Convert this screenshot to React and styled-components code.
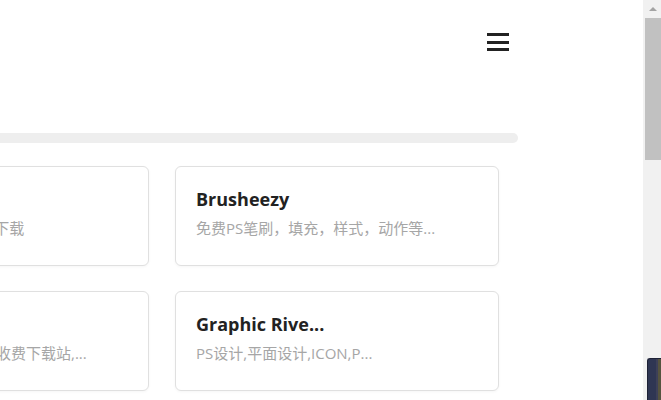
import React from "react";
import styled, { createGlobalStyle } from "styled-components";

const GlobalStyle = createGlobalStyle`
  html, body {
    margin: 0;
    padding: 0;
    background: #fff;
    font-family: "Open Sans", "Noto Sans CJK SC", sans-serif;
    overflow: hidden;
  }
`;

const Shell = styled.div`
  display: flex;
  height: 400px;
  overflow: hidden;
`;

const Main = styled.main`
  flex: 1;
  min-width: 0;
  overflow: hidden;
`;

const Wrapper = styled.div`
  width: 713px;
  margin-left: -195px;
  box-sizing: border-box;
`;

const Header = styled.header`
  display: flex;
  justify-content: flex-end;
  align-items: center;
  height: 84px;
  padding-right: 9px;
`;

const MenuButton = styled.button`
  width: 22px;
  height: 18px;
  padding: 0;
  border: none;
  background: none;
  display: flex;
  flex-direction: column;
  justify-content: space-between;
  cursor: pointer;
  span {
    display: block;
    height: 3px;
    background: #222;
  }
`;

const SearchBar = styled.div`
  margin-top: 49px;
  height: 10px;
  background: #eeeeee;
  border-radius: 5px;
`;

const Grid = styled.div`
  display: grid;
  grid-template-columns: 324px 324px;
  column-gap: 26px;
  row-gap: 25px;
  padding: 23px 20px;
`;

const Card = styled.a`
  display: block;
  height: 100px;
  box-sizing: border-box;
  padding: 20px 20px 0;
  border: 1px solid #e0e0e0;
  border-radius: 6px;
  background: #fff;
  box-shadow: 0 1px 3px rgba(0, 0, 0, 0.04);
  text-decoration: none;
`;

const Title = styled.h3`
  margin: 0;
  font-size: 18px;
  line-height: 24px;
  font-weight: 700;
  color: #222;
  white-space: nowrap;
  overflow: hidden;
  text-overflow: ellipsis;
`;

const Desc = styled.p`
  margin: 6px 0 0;
  font-size: 15px;
  line-height: 22px;
  color: #a6a6a6;
  white-space: nowrap;
  overflow: hidden;
  text-overflow: ellipsis;
`;

const ScrollTrack = styled.div`
  width: 18px;
  flex-shrink: 0;
  background: #f1f1f1;
  display: flex;
  flex-direction: column;
  align-items: flex-end;
`;

const ScrollArrow = styled.div`
  height: 18px;
  width: 16px;
  display: flex;
  align-items: center;
  justify-content: center;
  &::before {
    content: "";
    border-left: 4px solid transparent;
    border-right: 4px solid transparent;
    border-bottom: 4px solid #a3a3a3;
  }
`;

const ScrollThumb = styled.div`
  width: 16px;
  height: 142px;
  background: #c1c1c1;
`;

const FloatTab = styled.div`
  position: fixed;
  right: 0;
  top: 358px;
  width: 14px;
  height: 48px;
  box-sizing: border-box;
  border: 1px solid #1e2236;
  border-right: none;
  border-radius: 3px 0 0 3px;
  background: linear-gradient(90deg, #2f3653 0 60%, #3d4058 60% 80%, #55533f 80%);
`;

const sites = [
  { title: "Freepik", desc: "免费PSD高清图片素材下载" },
  { title: "Brusheezy", desc: "免费PS笔刷，填充，样式，动作等..." },
  { title: "千图网", desc: "免费素材图片设计下载收费下载站,..." },
  { title: "Graphic Rive...", desc: "PS设计,平面设计,ICON,P..." },
  { title: "Dribbble", desc: "设计师作品分享社区" },
  { title: "Behance", desc: "创意作品展示平台" },
];

export default function App() {
  return (
    <Shell>
      <GlobalStyle />
      <Main>
        <Wrapper>
          <Header>
            <MenuButton aria-label="menu">
              <span />
              <span />
              <span />
            </MenuButton>
          </Header>
          <SearchBar />
          <Grid>
            {sites.map((s) => (
              <Card key={s.title} href="#">
                <Title>{s.title}</Title>
                <Desc>{s.desc}</Desc>
              </Card>
            ))}
          </Grid>
        </Wrapper>
      </Main>
      <ScrollTrack>
        <ScrollArrow />
        <ScrollThumb />
      </ScrollTrack>
      <FloatTab />
    </Shell>
  );
}
